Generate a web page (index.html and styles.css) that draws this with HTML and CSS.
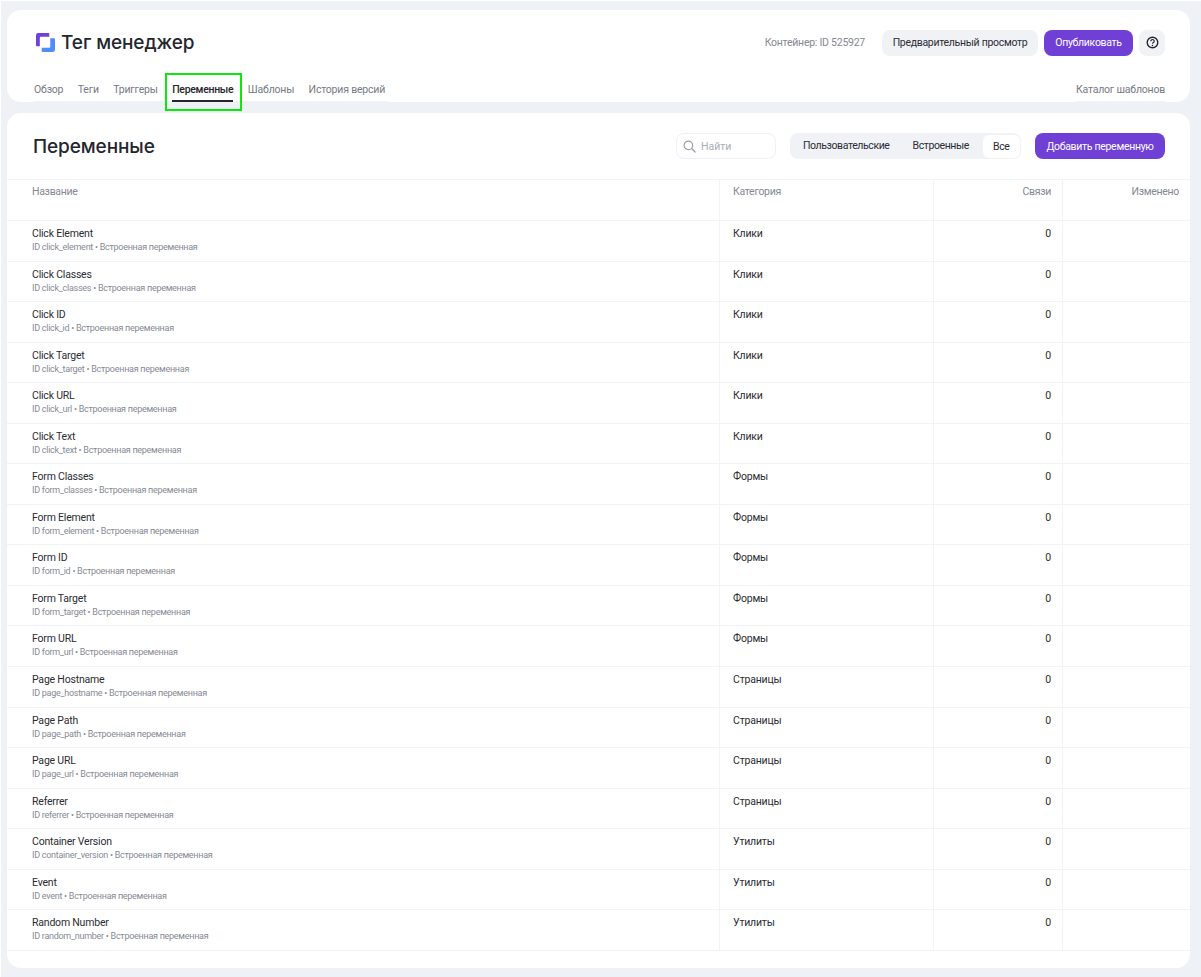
FILE: index.html
```html
<!DOCTYPE html>
<html lang="ru">
<head>
<meta charset="utf-8">
<title>Тег менеджер</title>
<link rel="stylesheet" href="styles.css">
</head>
<body>
<div class="page">
  <header class="card top">
    <div class="top-row">
      <div class="brand">
        <svg class="logo" viewBox="0 0 20 20" width="20" height="20" aria-hidden="true">
          <path fill="#6f3fd6" d="M2.500 0H13a1 1 0 0 1 1 1v3H5a1 1 0 0 0-1 1v9H1a1 1 0 0 1-1-1V2.500A2.500 2.500 0 0 1 2.500 0Z"/>
          <path fill="#4f8ef7" d="M15 5.500h4a1 1 0 0 1 1 1V17.500a2.500 2.500 0 0 1-2.500 2.500H7a1 1 0 0 1-1-1v-3.500h8a1 1 0 0 0 1-1Z"/>
        </svg>
        <span class="brand-name">Тег менеджер</span>
      </div>
      <div class="actions">
        <span class="container-id">Контейнер: ID 525927</span>
        <button class="btn btn-grey">Предварительный просмотр</button>
        <button class="btn btn-purple publish">Опубликовать</button>
        <button class="btn btn-grey help" aria-label="Справка">
          <svg viewBox="0 0 14 14" width="13" height="13" aria-hidden="true">
            <circle cx="7" cy="7" r="5.700" fill="none" stroke="#24262d" stroke-width="1.500"/>
            <path d="M5.200 5.600a1.800 1.800 0 1 1 2.800 1.500c-.7.400-1 .7-1 1.300" fill="none" stroke="#24262d" stroke-width="1.300"/>
            <circle cx="7" cy="10.200" r=".8" fill="#24262d"/>
          </svg>
        </button>
      </div>
    </div>
    <nav class="tabs">
      <div class="tab-group">
        <a class="tab">Обзор</a>
        <a class="tab">Теги</a>
        <a class="tab">Триггеры</a>
        <a class="tab active">Переменные<span class="highlight"></span></a>
        <a class="tab">Шаблоны</a>
        <a class="tab">История версий</a>
      </div>
      <div class="tab-group right">
        <a class="tab">Каталог шаблонов</a>
      </div>
    </nav>
  </header>

  <main class="card content">
    <div class="toolbar">
      <h1>Переменные</h1>
      <div class="tools">
        <label class="search">
          <svg viewBox="0 0 14 14" width="13" height="13" aria-hidden="true">
            <circle cx="5.800" cy="5.800" r="4.600" fill="none" stroke="#9a9ea8" stroke-width="1.300"/>
            <path d="M9.200 9.200 13 13" stroke="#9a9ea8" stroke-width="1.400" stroke-linecap="round"/>
          </svg>
          <span>Найти</span>
        </label>
        <div class="segment">
          <span class="seg">Пользовательские</span>
          <span class="seg">Встроенные</span>
          <span class="seg on">Все</span>
        </div>
        <button class="btn btn-purple add">Добавить переменную</button>
      </div>
    </div>

    <div class="table">
      <div class="row head">
        <div class="cell name-cell">Название</div>
        <div class="cell">Категория</div>
        <div class="cell num">Связи</div>
        <div class="cell num last">Изменено</div>
      </div>
      <div class="row"><div class="cell name-cell"><div class="name">Click Element</div><div class="sub">ID click_element • Встроенная переменная</div></div><div class="cell cat">Клики</div><div class="cell num val">0</div><div class="cell"></div></div>
      <div class="row"><div class="cell name-cell"><div class="name">Click Classes</div><div class="sub">ID click_classes • Встроенная переменная</div></div><div class="cell cat">Клики</div><div class="cell num val">0</div><div class="cell"></div></div>
      <div class="row"><div class="cell name-cell"><div class="name">Click ID</div><div class="sub">ID click_id • Встроенная переменная</div></div><div class="cell cat">Клики</div><div class="cell num val">0</div><div class="cell"></div></div>
      <div class="row"><div class="cell name-cell"><div class="name">Click Target</div><div class="sub">ID click_target • Встроенная переменная</div></div><div class="cell cat">Клики</div><div class="cell num val">0</div><div class="cell"></div></div>
      <div class="row"><div class="cell name-cell"><div class="name">Click URL</div><div class="sub">ID click_url • Встроенная переменная</div></div><div class="cell cat">Клики</div><div class="cell num val">0</div><div class="cell"></div></div>
      <div class="row"><div class="cell name-cell"><div class="name">Click Text</div><div class="sub">ID click_text • Встроенная переменная</div></div><div class="cell cat">Клики</div><div class="cell num val">0</div><div class="cell"></div></div>
      <div class="row"><div class="cell name-cell"><div class="name">Form Classes</div><div class="sub">ID form_classes • Встроенная переменная</div></div><div class="cell cat">Формы</div><div class="cell num val">0</div><div class="cell"></div></div>
      <div class="row"><div class="cell name-cell"><div class="name">Form Element</div><div class="sub">ID form_element • Встроенная переменная</div></div><div class="cell cat">Формы</div><div class="cell num val">0</div><div class="cell"></div></div>
      <div class="row"><div class="cell name-cell"><div class="name">Form ID</div><div class="sub">ID form_id • Встроенная переменная</div></div><div class="cell cat">Формы</div><div class="cell num val">0</div><div class="cell"></div></div>
      <div class="row"><div class="cell name-cell"><div class="name">Form Target</div><div class="sub">ID form_target • Встроенная переменная</div></div><div class="cell cat">Формы</div><div class="cell num val">0</div><div class="cell"></div></div>
      <div class="row"><div class="cell name-cell"><div class="name">Form URL</div><div class="sub">ID form_url • Встроенная переменная</div></div><div class="cell cat">Формы</div><div class="cell num val">0</div><div class="cell"></div></div>
      <div class="row"><div class="cell name-cell"><div class="name">Page Hostname</div><div class="sub">ID page_hostname • Встроенная переменная</div></div><div class="cell cat">Страницы</div><div class="cell num val">0</div><div class="cell"></div></div>
      <div class="row"><div class="cell name-cell"><div class="name">Page Path</div><div class="sub">ID page_path • Встроенная переменная</div></div><div class="cell cat">Страницы</div><div class="cell num val">0</div><div class="cell"></div></div>
      <div class="row"><div class="cell name-cell"><div class="name">Page URL</div><div class="sub">ID page_url • Встроенная переменная</div></div><div class="cell cat">Страницы</div><div class="cell num val">0</div><div class="cell"></div></div>
      <div class="row"><div class="cell name-cell"><div class="name">Referrer</div><div class="sub">ID referrer • Встроенная переменная</div></div><div class="cell cat">Страницы</div><div class="cell num val">0</div><div class="cell"></div></div>
      <div class="row"><div class="cell name-cell"><div class="name">Container Version</div><div class="sub">ID container_version • Встроенная переменная</div></div><div class="cell cat">Утилиты</div><div class="cell num val">0</div><div class="cell"></div></div>
      <div class="row"><div class="cell name-cell"><div class="name">Event</div><div class="sub">ID event • Встроенная переменная</div></div><div class="cell cat">Утилиты</div><div class="cell num val">0</div><div class="cell"></div></div>
      <div class="row"><div class="cell name-cell"><div class="name">Random Number</div><div class="sub">ID random_number • Встроенная переменная</div></div><div class="cell cat">Утилиты</div><div class="cell num val">0</div><div class="cell"></div></div>
    </div>
  </main>
</div>
</body>
</html>
```
FILE: styles.css
```css
* { box-sizing: border-box; }
html { background: #fff; }
body {
  margin: 0;
  font-family: Roboto, "Noto Sans", "Liberation Sans", sans-serif;
  color: #2b2d34;
  overflow: hidden;
}
.page {
  height: 976px;
  margin: 1px 0 0 1px;
  padding: 9px 11px 9px 6px;
  background: #eef1f6;
  display: flex;
  flex-direction: column;
  gap: 11px;
}
.card { background: #fff; border-radius: 14px; }
.top { height: 92px; padding: 0 25px 0 27px; display: flex; flex-direction: column; }
.top-row { display: flex; justify-content: space-between; align-items: center; height: 64px; }
.brand { display: flex; align-items: center; gap: 6px; padding-left: 2px; }
.logo { width: 19px; height: 19px; display: block; }
.brand-name { font-family: Inter, sans-serif; font-size: 19px; font-weight: 500; letter-spacing: -.1px; color: #24262d; }
.actions { display: flex; align-items: center; padding-top: 1px; }
.container-id { font-size: 10.500px; letter-spacing: -.25px; color: #848892; margin-right: 17px; }
.btn {
  border: 0;
  border-radius: 8px;
  height: 26px;
  font: inherit;
  font-size: 10.500px;
  letter-spacing: -.3px;
  padding: 0;
}
.btn-grey { background: #f0f2f6; color: #2b2d34; width: 156px; }
.btn-purple { background: #6f3fd6; color: #fff; }
.publish { width: 89px; margin-left: 6px; }
.help { width: 26px; margin-left: 6px; display: flex; align-items: center; justify-content: center; }
.tabs { display: flex; justify-content: space-between; height: 28px; }
.tab-group { display: flex; gap: 14.500px; border-bottom: 1px solid #f1f3f6; height: 28px; padding: 6px 3px 0 0; }
.tab-group.right { padding: 6px 0 0; }
.tab { position: relative; font-size: 10.500px; letter-spacing: -.2px; color: #767a84; line-height: 20px; white-space: nowrap; }
.tab.active { color: #24262d; font-weight: 500; letter-spacing: -.3px; }
.tab.active::after {
  content: "";
  position: absolute;
  left: 0;
  right: 0;
  top: 20px;
  height: 1.500px;
  background: #24262d;
}
.highlight {
  position: absolute;
  left: -7px;
  right: -9px;
  top: -7px;
  height: 38px;
  border: 2.500px solid #10e510;
}
.content { flex: 1; display: flex; flex-direction: column; min-height: 0; }
.toolbar { display: flex; justify-content: space-between; align-items: center; height: 66px; padding: 0 25px 0 26px; flex: none; }
h1 { margin: 0; font-family: Inter, sans-serif; font-size: 19px; font-weight: 500; letter-spacing: -.1px; color: #24262d; }
.tools { display: flex; align-items: center; }
.search {
  width: 100px;
  height: 26px;
  border: 1px solid #eef0f4;
  border-radius: 8px;
  display: flex;
  align-items: center;
  gap: 5px;
  padding-left: 6px;
  font-size: 10.500px;
  color: #a9adb6;
}
.segment {
  margin-left: 14px;
  width: 231px;
  height: 26px;
  border-radius: 8px;
  background: #f0f2f6;
  display: flex;
  align-items: center;
  font-size: 10.500px;
  letter-spacing: -.4px;
}
.seg { padding: 0 11.500px; line-height: 24px; white-space: nowrap; }
.seg:first-child { margin-left: 1.500px; }
.seg.on { background: #fff; border-radius: 7px; margin-left: auto; height: 25px; padding: 0 10.500px; border: 1px solid #f0f2f6; line-height: 23px; }
.add { width: 130px; margin-left: 14px; }
.table { flex: none; border-top: 1px solid #f1f3f6; }
.row {
  display: grid;
  grid-template-columns: 712px 214px 129px 1fr;
  height: 40.560px;
  border-bottom: 1px solid #f1f3f6;
}
.row.head { height: 41px; color: #848892; letter-spacing: -.3px; }
.cell {
  font-size: 10.500px;
  padding: 6px 11px 0 13px;
  border-left: 1px solid #f1f3f6;
  line-height: 14px;
}
.head .cell { padding-top: 5px; }
.name-cell { border-left: 0; padding-left: 25px; }
.num { text-align: right; }
.name { color: #2b2d34; white-space: nowrap; letter-spacing: -.2px; }
.sub { font-size: 9px; letter-spacing: -.27px; color: #868a94; line-height: 13px; margin-top: 0; white-space: nowrap; }
.cat, .val { color: #2b2d34; letter-spacing: -.2px; }
```
